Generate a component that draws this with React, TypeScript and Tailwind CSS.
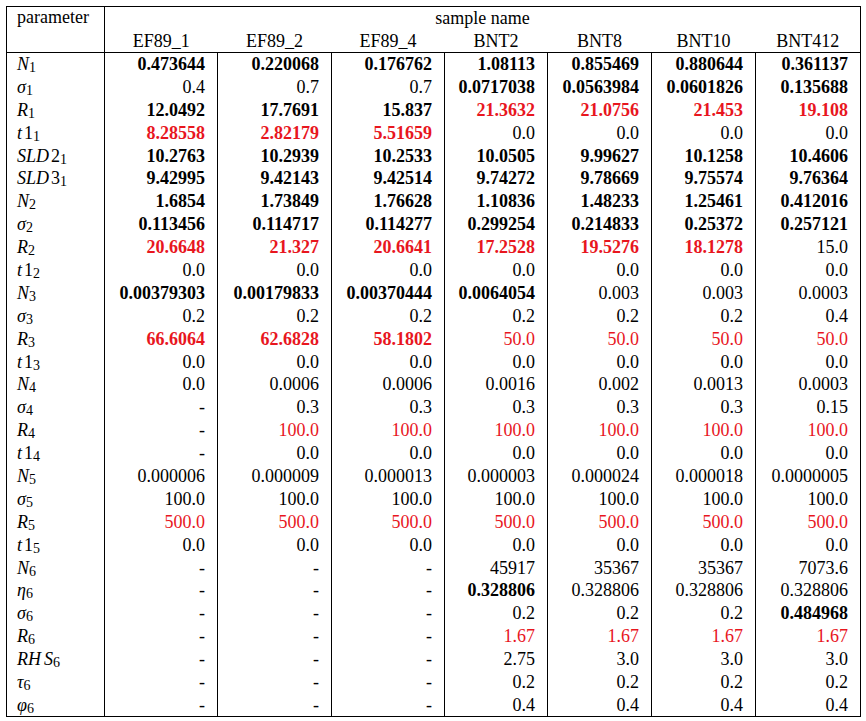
import * as React from "react"

// "*" suffix = bold, "^" prefix = red
type Row = { label: React.ReactNode; cells: string[] }

const samples = ["EF89_1", "EF89_2", "EF89_4", "BNT2", "BNT8", "BNT10", "BNT412"]

const Sub = ({ children }: { children: React.ReactNode }) => (
  <sub className="text-[14px] bottom-[-2px]">{children}</sub>
)

function sym(main: React.ReactNode, sub: string, mid?: string) {
  return (
    <span>
      <i>{main}</i>
      {mid && <span className="ml-[2px]">{mid}</span>}
      <Sub>{sub}</Sub>
    </span>
  )
}

const rows: Row[] = [
  { label: sym("N", "1"), cells: ["0.473644*", "0.220068*", "0.176762*", "1.08113*", "0.855469*", "0.880644*", "0.361137*"] },
  { label: sym("σ", "1"), cells: ["0.4", "0.7", "0.7", "0.0717038*", "0.0563984*", "0.0601826*", "0.135688*"] },
  { label: sym("R", "1"), cells: ["12.0492*", "17.7691*", "15.837*", "^21.3632*", "^21.0756*", "^21.453*", "^19.108*"] },
  { label: sym("t", "1", "1"), cells: ["^8.28558*", "^2.82179*", "^5.51659*", "0.0", "0.0", "0.0", "0.0"] },
  { label: sym("SLD", "1", "2"), cells: ["10.2763*", "10.2939*", "10.2533*", "10.0505*", "9.99627*", "10.1258*", "10.4606*"] },
  { label: sym("SLD", "1", "3"), cells: ["9.42995*", "9.42143*", "9.42514*", "9.74272*", "9.78669*", "9.75574*", "9.76364*"] },
  { label: sym("N", "2"), cells: ["1.6854*", "1.73849*", "1.76628*", "1.10836*", "1.48233*", "1.25461*", "0.412016*"] },
  { label: sym("σ", "2"), cells: ["0.113456*", "0.114717*", "0.114277*", "0.299254*", "0.214833*", "0.25372*", "0.257121*"] },
  { label: sym("R", "2"), cells: ["^20.6648*", "^21.327*", "^20.6641*", "^17.2528*", "^19.5276*", "^18.1278*", "15.0"] },
  { label: sym("t", "2", "1"), cells: ["0.0", "0.0", "0.0", "0.0", "0.0", "0.0", "0.0"] },
  { label: sym("N", "3"), cells: ["0.00379303*", "0.00179833*", "0.00370444*", "0.0064054*", "0.003", "0.003", "0.0003"] },
  { label: sym("σ", "3"), cells: ["0.2", "0.2", "0.2", "0.2", "0.2", "0.2", "0.4"] },
  { label: sym("R", "3"), cells: ["^66.6064*", "^62.6828*", "^58.1802*", "^50.0", "^50.0", "^50.0", "^50.0"] },
  { label: sym("t", "3", "1"), cells: ["0.0", "0.0", "0.0", "0.0", "0.0", "0.0", "0.0"] },
  { label: sym("N", "4"), cells: ["0.0", "0.0006", "0.0006", "0.0016", "0.002", "0.0013", "0.0003"] },
  { label: sym("σ", "4"), cells: ["-", "0.3", "0.3", "0.3", "0.3", "0.3", "0.15"] },
  { label: sym("R", "4"), cells: ["-", "^100.0", "^100.0", "^100.0", "^100.0", "^100.0", "^100.0"] },
  { label: sym("t", "4", "1"), cells: ["-", "0.0", "0.0", "0.0", "0.0", "0.0", "0.0"] },
  { label: sym("N", "5"), cells: ["0.000006", "0.000009", "0.000013", "0.000003", "0.000024", "0.000018", "0.0000005"] },
  { label: sym("σ", "5"), cells: ["100.0", "100.0", "100.0", "100.0", "100.0", "100.0", "100.0"] },
  { label: sym("R", "5"), cells: ["^500.0", "^500.0", "^500.0", "^500.0", "^500.0", "^500.0", "^500.0"] },
  { label: sym("t", "5", "1"), cells: ["0.0", "0.0", "0.0", "0.0", "0.0", "0.0", "0.0"] },
  { label: sym("N", "6"), cells: ["-", "-", "-", "45917", "35367", "35367", "7073.6"] },
  { label: sym("η", "6"), cells: ["-", "-", "-", "0.328806*", "0.328806", "0.328806", "0.328806"] },
  { label: sym("σ", "6"), cells: ["-", "-", "-", "0.2", "0.2", "0.2", "0.484968*"] },
  { label: sym("R", "6"), cells: ["-", "-", "-", "^1.67", "^1.67", "^1.67", "^1.67"] },
  {
    label: (
      <span>
        <i>RH</i>
        <i className="ml-[3px]">S</i>
        <Sub>6</Sub>
      </span>
    ),
    cells: ["-", "-", "-", "2.75", "3.0", "3.0", "3.0"],
  },
  { label: sym("τ", "6"), cells: ["-", "-", "-", "0.2", "0.2", "0.2", "0.2"] },
  { label: sym("φ", "6"), cells: ["-", "-", "-", "0.4", "0.4", "0.4", "0.4"] },
]

function Cell({ raw }: { raw: string }) {
  const red = raw.startsWith("^")
  const bold = raw.endsWith("*")
  const text = raw.replace("^", "").replace("*", "")
  return (
    <td
      className={
        "h-[22.9px] p-0 pr-3 text-right leading-none border-l border-black" +
        (bold ? " font-bold" : "") +
        (red ? " text-[#e8161e]" : "")
      }
    >
      {text}
    </td>
  )
}

export default function App() {
  return (
    <div className="bg-white w-[866px] h-[721px] pt-[6px] pl-[6px] font-['Liberation_Serif','DejaVu_Serif',serif] text-[18px] text-black">
      <table className="w-[854px] table-fixed border-collapse border border-black">
        <colgroup>
          <col className="w-[98px]" />
          <col className="w-[113px]" />
          <col className="w-[114px]" />
          <col className="w-[113px]" />
          <col className="w-[103px]" />
          <col className="w-[104px]" />
          <col className="w-[104px]" />
          <col className="w-[105px]" />
        </colgroup>
        <thead>
          <tr>
            <th
              rowSpan={2}
              className="p-0 pl-[10px] align-top text-left font-normal leading-[21px] border-r border-b border-black"
            >
              parameter
            </th>
            <th colSpan={7} className="h-[23px] p-0 font-normal text-center leading-none">
              sample name
            </th>
          </tr>
          <tr>
            {samples.map((s) => (
              <th key={s} className="h-[23px] p-0 font-normal text-center leading-none border-b border-black">
                {s}
              </th>
            ))}
          </tr>
        </thead>
        <tbody>
          {rows.map((r, i) => (
            <tr key={i}>
              <td className="h-[22.9px] p-0 pl-[10px] text-left leading-none border-r border-black">{r.label}</td>
              {r.cells.map((c, j) => (
                <Cell key={j} raw={c} />
              ))}
            </tr>
          ))}
        </tbody>
      </table>
    </div>
  )
}
